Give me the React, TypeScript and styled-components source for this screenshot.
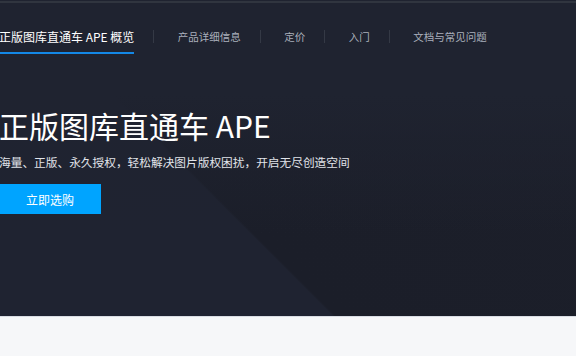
import styled, { createGlobalStyle } from 'styled-components';

const GlobalStyle = createGlobalStyle`
  body {
    margin: 0;
    background: #f6f7f9;
    font-family: "Noto Sans CJK SC", "Noto Sans", sans-serif;
  }
`;

const navItems = ['产品详细信息', '定价', '入门', '文档与常见问题'];

export default function App() {
  return (
    <>
      <GlobalStyle />
      <Hero>
        <Container>
          <Nav>
            <Tab $active>正版图库直通车 APE 概览</Tab>
            {navItems.map((item) => (
              <NavGroup key={item}>
                <Divider />
                <Tab>{item}</Tab>
              </NavGroup>
            ))}
          </Nav>
          <Title>正版图库直通车 APE</Title>
          <Subtitle>海量、正版、永久授权，轻松解决图片版权困扰，开启无尽创造空间</Subtitle>
          <BuyButton>立即选购</BuyButton>
        </Container>
      </Hero>
      <Content />
    </>
  );
}

const Hero = styled.section`
  padding: 1px 0 102px;
  background:
    linear-gradient(to bottom, #1f2330 0%, #1f2330 30%, rgba(31, 35, 48, 0) 74%),
    linear-gradient(45deg, #1f2331 0%, #1f2331 37.3%, #1b1e29 37.6%, #1c1f2a 100%);
  border-bottom: 1px solid #d9dde4;
  overflow: hidden;
`;

const Container = styled.div`
  margin-left: -1px;
`;

const Nav = styled.nav`
  display: flex;
  align-items: flex-start;
  border-top: 2px solid #30353f;
`;

const NavGroup = styled.div`
  display: flex;
  align-items: flex-start;
`;

const Tab = styled.a<{ $active?: boolean }>`
  padding: 24px 0 5px;
  line-height: 20px;
  font-size: ${(p) => (p.$active ? '12px' : '10.5px')};
  color: ${(p) => (p.$active ? '#ffffff' : '#aab0bc')};
  border-bottom: 2px solid ${(p) => (p.$active ? '#1488e6' : 'transparent')};
  white-space: nowrap;
  cursor: pointer;
`;

const Divider = styled.span`
  width: 1px;
  height: 13px;
  margin: 27px 23.5px 0 19px;
  background: #343945;
`;

const Title = styled.h1`
  margin: 56px 0 0;
  font-size: 30px;
  line-height: 30px;
  font-weight: 400;
  color: #ffffff;
`;

const Subtitle = styled.p`
  margin: 12px 0 0;
  font-size: 11.7px;
  line-height: 20px;
  color: #e1e4ea;
`;

const BuyButton = styled.button`
  display: block;
  margin-top: 12px;
  width: 102px;
  height: 30px;
  border: none;
  background: #00a4ff;
  color: #ffffff;
  font-family: inherit;
  font-size: 12px;
  cursor: pointer;
`;

const Content = styled.main`
  min-height: 40px;
  background: #f6f7f9;
`;
